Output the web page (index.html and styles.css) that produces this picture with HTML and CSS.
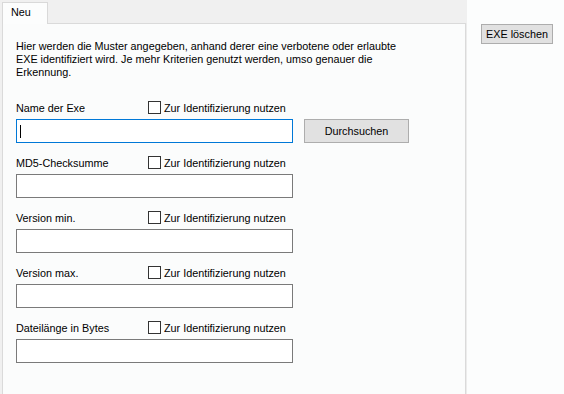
FILE: index.html
```html
<!DOCTYPE html>
<html lang="de">
<head>
    <meta charset="UTF-8">
    <title>EXE Muster</title>
    <link rel="stylesheet" href="styles.css">
</head>
<body>

    <div class="tabs">
        <div class="tab-strip">
            <div class="tab">Neu</div>
        </div>
        <div class="tab-panel">
            <p class="intro">Hier werden die Muster angegeben, anhand derer eine verbotene oder erlaubte EXE identifiziert wird. Je mehr Kriterien genutzt werden, umso genauer die Erkennung.</p>

            <div class="field">
                <div class="field-head">
                    <span class="field-label">Name der Exe</span>
                    <label class="check"><span class="box"></span>Zur Identifizierung nutzen</label>
                </div>
                <div class="field-row">
                    <div class="input focused"><span class="caret"></span></div>
                    <button class="btn browse">Durchsuchen</button>
                </div>
            </div>

            <div class="field">
                <div class="field-head">
                    <span class="field-label">MD5-Checksumme</span>
                    <label class="check"><span class="box"></span>Zur Identifizierung nutzen</label>
                </div>
                <div class="field-row">
                    <div class="input"></div>
                </div>
            </div>

            <div class="field">
                <div class="field-head">
                    <span class="field-label">Version min.</span>
                    <label class="check"><span class="box"></span>Zur Identifizierung nutzen</label>
                </div>
                <div class="field-row">
                    <div class="input"></div>
                </div>
            </div>

            <div class="field">
                <div class="field-head">
                    <span class="field-label">Version max.</span>
                    <label class="check"><span class="box"></span>Zur Identifizierung nutzen</label>
                </div>
                <div class="field-row">
                    <div class="input"></div>
                </div>
            </div>

            <div class="field">
                <div class="field-head">
                    <span class="field-label">Dateilänge in Bytes</span>
                    <label class="check"><span class="box"></span>Zur Identifizierung nutzen</label>
                </div>
                <div class="field-row">
                    <div class="input"></div>
                </div>
            </div>
        </div>
    </div>

    <div class="side">
        <button class="btn delete">EXE löschen</button>
    </div>

</body>
</html>
```

FILE: styles.css
```css
body {
    margin: 0;
    height: 394px;
    overflow: hidden;
    display: flex;
    font-family: "Liberation Sans", Arial, sans-serif;
    font-size: 10.8px;
    color: #000;
    background-color: #fcfdfd;
}
.tabs {
    width: 467px;
    display: flex;
    flex-direction: column;
    background-color: #f0f0f0;
}
.tab-strip {
    height: 23px;
    padding: 2px 0 0 2px;
    box-sizing: border-box;
    display: flex;
}
.tab {
    position: relative;
    z-index: 1;
    width: 46px;
    height: 22px;
    box-sizing: border-box;
    padding: 3px 0 0 8px;
    background-color: #fcfdfd;
    border: 1px solid #d9d9d9;
    border-bottom: none;
}
.tab-panel {
    flex: 1;
    margin-left: 2px;
    margin-right: 1px;
    padding: 16px 0 0 13px;
    background-color: #fbfcfc;
    border: 1px solid #dadada;
    border-bottom: none;
    box-shadow: 1px 0 0 #ececec;
}
.intro {
    margin: 0 0 22px 0;
    width: 400px;
    line-height: 13px;
}
.field {
    margin-bottom: 13px;
}
.field-head {
    display: flex;
    align-items: center;
    height: 13px;
    margin-bottom: 5px;
}
.field-label {
    width: 132px;
}
.check {
    display: flex;
    align-items: center;
}
.box {
    width: 13px;
    height: 13px;
    box-sizing: border-box;
    border: 1px solid #333;
    background-color: #fff;
    margin-right: 3px;
}
.field-row {
    display: flex;
    align-items: center;
}
.input {
    width: 277px;
    height: 24px;
    box-sizing: border-box;
    border: 1px solid #7a7a7a;
    background-color: #fff;
    display: flex;
    align-items: center;
}
.input.focused {
    border-color: #0078d7;
}
.caret {
    width: 1px;
    height: 13px;
    margin-left: 3px;
    background-color: #000;
}
.btn {
    font-family: "Liberation Sans", Arial, sans-serif;
    font-size: 10.8px;
    color: #000;
    background-color: #e1e1e1;
    border: 1px solid #adadad;
    padding: 0;
}
.browse {
    width: 105px;
    height: 24px;
    margin-left: 11px;
}
.side {
    padding: 24px 0 0 14px;
}
.delete {
    width: 72px;
    height: 20px;
}
```
